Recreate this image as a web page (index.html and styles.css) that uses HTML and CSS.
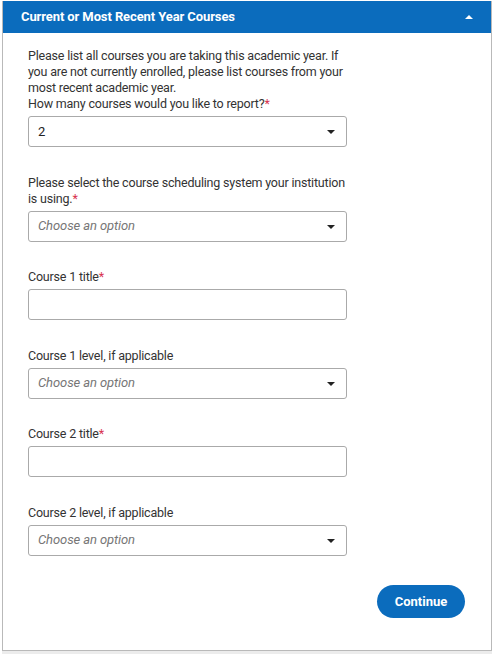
FILE: index.html
```html
<!DOCTYPE html>
<html lang="en">
<head>
<meta charset="utf-8">
<title>Current or Most Recent Year Courses</title>
<link rel="stylesheet" href="styles.css">
</head>
<body>
<div class="page">
  <section class="panel">
    <header class="panel-head">
      <h2 class="panel-title">Current or Most Recent Year Courses</h2>
      <span class="collapse-caret" aria-hidden="true"></span>
    </header>
    <div class="panel-body">
      <div class="field first">
        <p class="label">Please list all courses you are taking this academic year. If you are not currently enrolled, please list courses from your most recent academic year.<br>How many courses would you like to report?<span class="req">*</span></p>
        <div class="select"><span class="value">2</span><span class="caret"></span></div>
      </div>
      <div class="field">
        <p class="label">Please select the course scheduling system your institution is using.<span class="req">*</span></p>
        <div class="select"><span class="placeholder">Choose an option</span><span class="caret"></span></div>
      </div>
      <div class="field">
        <p class="label">Course 1 title<span class="req">*</span></p>
        <div class="input"></div>
      </div>
      <div class="field">
        <p class="label">Course 1 level, if applicable</p>
        <div class="select"><span class="placeholder">Choose an option</span><span class="caret"></span></div>
      </div>
      <div class="field">
        <p class="label">Course 2 title<span class="req">*</span></p>
        <div class="input"></div>
      </div>
      <div class="field">
        <p class="label">Course 2 level, if applicable</p>
        <div class="select"><span class="placeholder">Choose an option</span><span class="caret"></span></div>
      </div>
      <div class="actions">
        <button class="btn-continue" type="button">Continue</button>
      </div>
    </div>
  </section>
  <div class="footer-strip"></div>
</div>
</body>
</html>
```
FILE: styles.css
```css
html, body {
  margin: 0;
  padding: 0;
  background: #ffffff;
}
body {
  font-family: Roboto, "Liberation Sans", Arial, sans-serif;
  font-size: 13px;
  line-height: 16px;
  color: #333333;
}
.page {
  width: 495px;
  height: 654px;
  padding-top: 1px;
  box-sizing: border-box;
  display: flex;
  flex-direction: column;
}
.panel {
  margin: 0 3px 0 2px;
  border-left: 1px solid #b9b9b9;
  border-right: 1px solid #b9b9b9;
  border-bottom: 1px solid #b9b9b9;
  height: 650px;
  box-sizing: border-box;
  display: flex;
  flex-direction: column;
}
.panel-head {
  height: 32px;
  background: #0b6cbd;
  display: flex;
  align-items: center;
  justify-content: space-between;
  padding: 0 18px 0 18px;
  flex: none;
}
.panel-title {
  margin: 0;
  font-size: 13px;
  font-weight: 700;
  color: #ffffff;
  line-height: 16px;
  letter-spacing: -0.1px;
}
.collapse-caret {
  width: 0;
  height: 0;
  border-left: 4.5px solid transparent;
  border-right: 4.5px solid transparent;
  border-bottom: 4px solid #ffffff;
  margin-top: -1px;
}
.panel-body {
  padding: 15px 26px 0 25px;
  display: flex;
  flex-direction: column;
  flex: 1;
}
.field {
  display: flex;
  flex-direction: column;
  gap: 4px;
  width: 319px;
  margin-top: 27.6px;
}
.field.first {
  margin-top: 0;
}
.label {
  margin: 0;
  width: 322px;
  font-size: 12.5px;
  letter-spacing: -0.2px;
}
.req {
  color: #d8334f;
}
.select, .input {
  height: 31px;
  box-sizing: border-box;
  border: 1px solid #aaaaaa;
  border-radius: 3px;
  background: #ffffff;
  display: flex;
  align-items: center;
  justify-content: space-between;
  padding: 0 11px 0 9px;
}
.value {
  color: #222222;
}
.placeholder {
  color: #767676;
  font-style: italic;
  letter-spacing: -0.1px;
}
.caret {
  width: 0;
  height: 0;
  border-left: 4px solid transparent;
  border-right: 4px solid transparent;
  border-top: 4px solid #222222;
  margin-top: 1px;
}
.actions {
  display: flex;
  justify-content: flex-end;
  margin-top: 29px;
}
.btn-continue {
  width: 88px;
  height: 33px;
  border: none;
  border-radius: 17px;
  background: #0b6cbd;
  color: #ffffff;
  font-family: Roboto, "Liberation Sans", Arial, sans-serif;
  font-size: 13px;
  font-weight: 700;
  padding: 0;
}
.footer-strip {
  flex: 1;
  background: #ececec;
  margin: 0 3px 0 2px;
}
```
